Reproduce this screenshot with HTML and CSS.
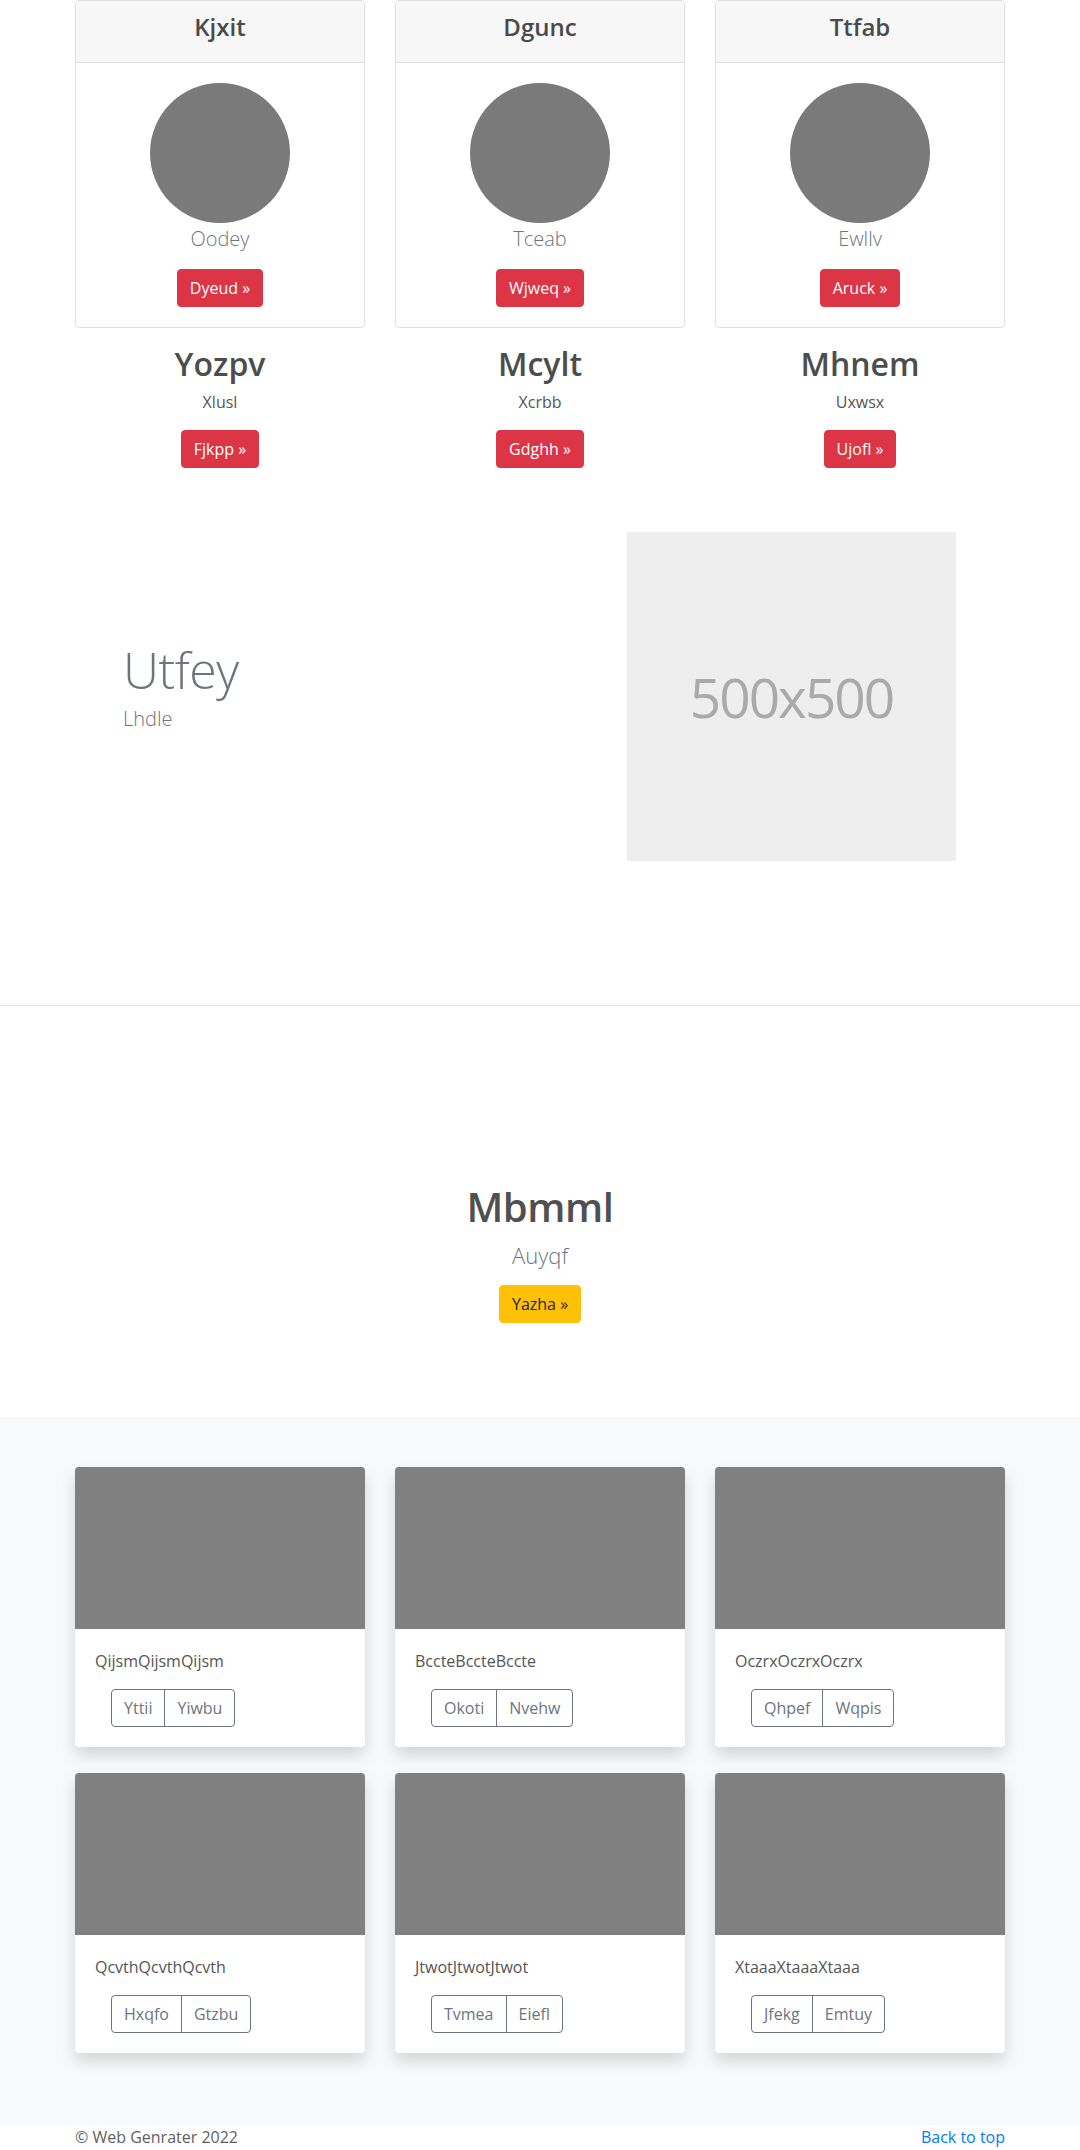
FILE: index.html
```html
<!DOCTYPE html>
<html lang="en">
<head>
<meta charset="utf-8">
<title>Web Genrater</title>
<link rel="stylesheet" href="styles.css">
</head>
<body>
<section class="pricing">
  <div class="container">
    <div class="grid3">
      <div class="pcard">
        <div class="pcard-head"><h4>Kjxit</h4></div>
        <div class="pcard-body">
          <svg class="avatar" width="140" height="140" viewBox="0 0 140 140"><circle cx="70" cy="70" r="70" fill="#7a7a7a"/></svg>
          <p class="lead">Oodey</p>
          <a class="btn btn-danger" href="#">Dyeud &raquo;</a>
        </div>
      </div>
      <div class="pcard">
        <div class="pcard-head"><h4>Dgunc</h4></div>
        <div class="pcard-body">
          <svg class="avatar" width="140" height="140" viewBox="0 0 140 140"><circle cx="70" cy="70" r="70" fill="#7a7a7a"/></svg>
          <p class="lead">Tceab</p>
          <a class="btn btn-danger" href="#">Wjweq &raquo;</a>
        </div>
      </div>
      <div class="pcard">
        <div class="pcard-head"><h4>Ttfab</h4></div>
        <div class="pcard-body">
          <svg class="avatar" width="140" height="140" viewBox="0 0 140 140"><circle cx="70" cy="70" r="70" fill="#7a7a7a"/></svg>
          <p class="lead">Ewllv</p>
          <a class="btn btn-danger" href="#">Aruck &raquo;</a>
        </div>
      </div>
    </div>
    <div class="grid3 features">
      <div class="feature">
        <h2>Yozpv</h2>
        <p>Xlusl</p>
        <p><a class="btn btn-danger" href="#">Fjkpp &raquo;</a></p>
      </div>
      <div class="feature">
        <h2>Mcylt</h2>
        <p>Xcrbb</p>
        <p><a class="btn btn-danger" href="#">Gdghh &raquo;</a></p>
      </div>
      <div class="feature">
        <h2>Mhnem</h2>
        <p>Uxwsx</p>
        <p><a class="btn btn-danger" href="#">Ujofl &raquo;</a></p>
      </div>
    </div>
  </div>
</section>

<section class="hero">
  <div class="container hero-grid">
    <div class="hero-text">
      <h1 class="display">Utfey</h1>
      <p class="hero-lead">Lhdle</p>
    </div>
    <div class="placeholder">500x500</div>
  </div>
</section>

<section class="center-block">
  <h1 class="center-title">Mbmml</h1>
  <p class="center-lead">Auyqf</p>
  <p class="center-action"><a class="btn btn-warning" href="#">Yazha &raquo;</a></p>
</section>

<section class="album">
  <div class="container grid3 album-grid">
    <div class="acard">
      <div class="acard-img"></div>
      <div class="acard-body">
        <p class="acard-text">QijsmQijsmQijsm</p>
        <div class="btn-group"><a class="btn btn-outline" href="#">Yttii</a><a class="btn btn-outline" href="#">Yiwbu</a></div>
      </div>
    </div>
    <div class="acard">
      <div class="acard-img"></div>
      <div class="acard-body">
        <p class="acard-text">BccteBccteBccte</p>
        <div class="btn-group"><a class="btn btn-outline" href="#">Okoti</a><a class="btn btn-outline" href="#">Nvehw</a></div>
      </div>
    </div>
    <div class="acard">
      <div class="acard-img"></div>
      <div class="acard-body">
        <p class="acard-text">OczrxOczrxOczrx</p>
        <div class="btn-group"><a class="btn btn-outline" href="#">Qhpef</a><a class="btn btn-outline" href="#">Wqpis</a></div>
      </div>
    </div>
    <div class="acard">
      <div class="acard-img"></div>
      <div class="acard-body">
        <p class="acard-text">QcvthQcvthQcvth</p>
        <div class="btn-group"><a class="btn btn-outline" href="#">Hxqfo</a><a class="btn btn-outline" href="#">Gtzbu</a></div>
      </div>
    </div>
    <div class="acard">
      <div class="acard-img"></div>
      <div class="acard-body">
        <p class="acard-text">JtwotJtwotJtwot</p>
        <div class="btn-group"><a class="btn btn-outline" href="#">Tvmea</a><a class="btn btn-outline" href="#">Eiefl</a></div>
      </div>
    </div>
    <div class="acard">
      <div class="acard-img"></div>
      <div class="acard-body">
        <p class="acard-text">XtaaaXtaaaXtaaa</p>
        <div class="btn-group"><a class="btn btn-outline" href="#">Jfekg</a><a class="btn btn-outline" href="#">Emtuy</a></div>
      </div>
    </div>
  </div>
</section>

<footer class="footer">
  <div class="container footer-row">
    <p>&copy; Web Genrater 2022</p>
    <a class="top-link" href="#">Back to top</a>
  </div>
</footer>
</body>
</html>
```

FILE: styles.css
```css
* { box-sizing: border-box; }
html, body { margin: 0; padding: 0; }
body {
  font-family: "Open Sans", "Noto Sans", sans-serif;
  font-size: 16px;
  line-height: 24px;
  color: #555;
  background: #fff;
}
h1, h2, h4, p { margin: 0; }

.container { width: 930px; margin: 0 auto; }
.grid3 {
  display: grid;
  grid-template-columns: repeat(3, 290px);
  column-gap: 30px;
}

/* buttons */
.btn {
  display: inline-block;
  padding: 6px 12px;
  font-size: 16px;
  line-height: 24px;
  font-weight: 400;
  border: 1px solid transparent;
  border-radius: 4px;
  text-decoration: none;
  text-align: center;
  vertical-align: middle;
}
.btn-danger { background: #dc3545; border-color: #dc3545; color: #fff; }
.btn-warning { background: #ffc107; border-color: #ffc107; color: #212529; }
.btn-outline { background: transparent; border-color: #6c757d; color: #6c757d; }

/* pricing cards */
.pcard {
  border: 1px solid #dfdfdf;
  border-radius: 4px;
  background: #fff;
}
.pcard-head {
  background: #f7f7f7;
  padding: 12px 20px;
  border-bottom: 1px solid #dfdfdf;
  border-radius: 3px 3px 0 0;
  text-align: center;
}
.pcard-head h4 {
  font-size: 24px;
  line-height: 28.8px;
  font-weight: 600;
  margin-bottom: 8px;
  color: #4a4a4a;
}
.pcard-body { padding: 20px; text-align: center; }
.avatar { display: block; margin: 0 auto; }
.lead {
  font-size: 20px;
  line-height: 30px;
  font-weight: 300;
  color: #6c757d;
  margin: 1px 0 15px;
}

/* features */
.features { margin-top: 17px; text-align: center; }
.feature h2 {
  font-size: 32px;
  line-height: 38.4px;
  font-weight: 600;
  color: #4d4d4d;
  margin-bottom: 7px;
}
.feature p { margin-bottom: 16px; }

/* hero */
.hero {
  padding: 48px 0 144px;
  border-bottom: 1px solid #e5e5e5;
}
.hero-grid {
  display: grid;
  grid-template-columns: 552px 329px;
  align-items: center;
}
.hero-text { padding-left: 48px; }
.display {
  font-size: 50px;
  line-height: 52px;
  font-weight: 300;
  letter-spacing: -0.5px;
  color: #6c757d;
  margin-bottom: 8px;
}
.hero-lead {
  font-size: 20px;
  line-height: 30px;
  font-weight: 300;
  color: #6c757d;
  margin-bottom: 16px;
}
.placeholder {
  width: 329px;
  height: 329px;
  background: #eeeeee;
  color: #aaaaaa;
  display: flex;
  align-items: center;
  justify-content: center;
  font-size: 55px;
  letter-spacing: -2px;
  font-weight: 400;
}

/* centered block */
.center-block {
  padding: 177px 0 94px;
  text-align: center;
}
.center-title {
  font-size: 40px;
  line-height: 48px;
  font-weight: 600;
  letter-spacing: -0.4px;
  color: #505050;
  margin-bottom: 8px;
}
.center-lead {
  font-size: 22px;
  line-height: 33px;
  font-weight: 300;
  color: #6c757d;
  margin-bottom: 13px;
}

/* album */
.album {
  background: #f8f9fa;
  padding: 50px 0 72px;
}
.album-grid { row-gap: 26px; }
.acard {
  background: #fff;
  border-radius: 4px;
  box-shadow: 0 8px 16px rgba(0, 0, 0, 0.15);
  overflow: hidden;
}
.acard-img { height: 162px; background: #808080; }
.acard-body { padding: 20px; }
.acard-text { margin-bottom: 16px; color: #555; }
.btn-group { display: inline-flex; margin-left: 16px; }
.btn-group .btn:first-child { border-radius: 4px 0 0 4px; }
.btn-group .btn + .btn { border-radius: 0 4px 4px 0; margin-left: -1px; }

/* footer */
.footer { color: #5f5f5f; }
.footer-row { display: flex; justify-content: space-between; }
.top-link { color: #007bff; text-decoration: none; }
```
